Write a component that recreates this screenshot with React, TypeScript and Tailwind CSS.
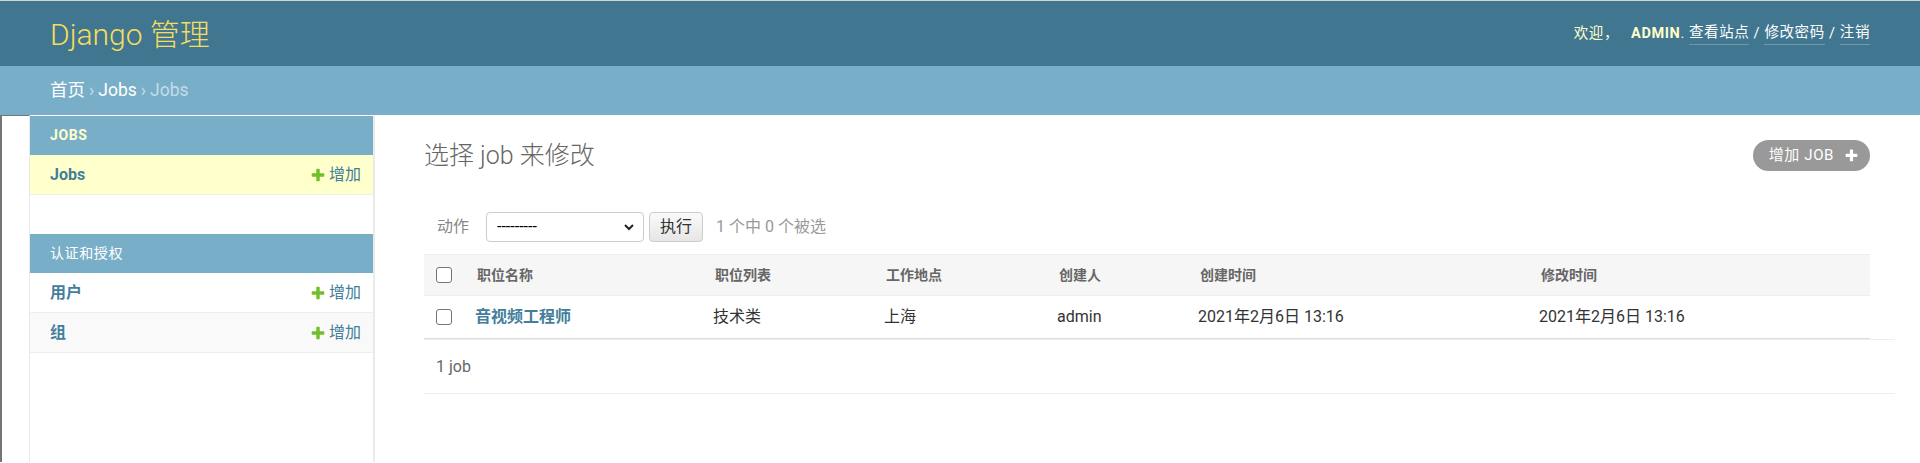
import React from 'react';

const PLUS_PATH =
  'M1600 796v192q0 40-28 68t-68 28h-416v416q0 40-28 68t-68 28h-192q-40 0-68-28t-28-68v-416h-416q-40 0-68-28t-28-68v-192q0-40 28-68t68-28h416v-416q0-40 28-68t68-28h192q40 0 68 28t28 68v416h416q40 0 68 28t28 68z';

const PlusIcon = ({ color, size }: { color: string; size: number }) => (
  <svg width={size} height={size} viewBox="0 0 1792 1792">
    <path fill={color} d={PLUS_PATH} />
  </svg>
);

type Section = {
  title: string;
  current?: boolean;
  models: { name: string; current?: boolean }[];
};

const sections: Section[] = [
  { title: 'Jobs', current: true, models: [{ name: 'Jobs', current: true }] },
  { title: '认证和授权', models: [{ name: '用户' }, { name: '组' }] },
];

const columns = [
  { label: '职位名称', width: 'w-[238px]' },
  { label: '职位列表', width: 'w-[171px]' },
  { label: '工作地点', width: 'w-[173px]' },
  { label: '创建人', width: 'w-[141px]' },
  { label: '创建时间', width: 'w-[341px]' },
  { label: '修改时间', width: 'w-[341px]' },
];

const row = ['技术类', '上海', 'admin', '2021年2月6日 13:16', '2021年2月6日 13:16'];

const Checkbox = () => (
  <div className="w-[16px] h-[16px] rounded-[3px] border border-[#767676] bg-white" />
);

const Sidebar = () => (
  <div className="w-[345px] shrink-0 border-r-2 border-[#eaeaea] pt-px">
    {sections.map((section, i) => (
      <div key={section.title} className={i === 0 ? 'mb-[39px]' : ''}>
        <div
          className={`h-[39px] flex items-center pl-[20px] bg-[#79aec8] text-[14px] uppercase tracking-[0.6px] ${
            section.current ? 'font-bold text-[#ffffcc]' : 'text-white'
          }`}
        >
          {section.title}
        </div>
        {section.models.map((model, j) => (
          <div
            key={model.name}
            className={`h-[40px] flex items-center justify-between pl-[20px] pr-[12px] border-b border-[#eeeeee] ${
              model.current ? 'bg-[#ffffcc]' : j % 2 === 1 ? 'bg-[#f9f9f9]' : 'bg-white'
            }`}
          >
            <span className="text-[16px] font-bold text-[#447e9b]">{model.name}</span>
            <span className="flex items-center gap-[3px] text-[16px] text-[#447e9b]">
              <PlusIcon color="#70bf2b" size={16} />
              增加
            </span>
          </div>
        ))}
      </div>
    ))}
  </div>
);

const App = () => {
  return (
    <div className="min-h-screen bg-white border-t border-[#d4d4d4] font-['Roboto','Noto_Sans_CJK_SC',sans-serif]">
      <header className="h-[65px] bg-[#417690] flex items-center justify-between px-[50px]">
        <div className="text-[30px] font-light leading-none text-[#f5dd5d] pt-[2px]">Django 管理</div>
        <div className="text-[14.5px] tracking-[0.6px] text-[#ffffcc] flex items-center">
          <span>欢迎，</span>
          <span className="font-bold ml-[12px]">ADMIN</span>
          <span>.&nbsp;</span>
          <span className="text-white border-b border-white/25">查看站点</span>
          <span className="text-white">&nbsp;/&nbsp;</span>
          <span className="text-white border-b border-white/25">修改密码</span>
          <span className="text-white">&nbsp;/&nbsp;</span>
          <span className="text-white border-b border-white/25">注销</span>
        </div>
      </header>

      <div className="h-[49px] bg-[#79aec8] flex items-center px-[50px] text-[17.5px] text-[#c4dce8]">
        <span className="text-white">首页</span>
        <span className="mx-[4px]">›</span>
        <span className="text-white">Jobs</span>
        <span className="mx-[4px]">›</span>
        <span>Jobs</span>
      </div>

      <div className="flex h-[347px]">
        <div className="w-[30px] shrink-0 border-l-2 border-t border-l-[#767676] border-t-[#767676] border-r border-r-[#eaeaea]" />
        <Sidebar />

        <main className="flex-1 min-w-0 pl-[49px] pr-[50px] pt-[25px]">
          <div className="flex items-start justify-between">
            <h1 className="text-[25px] font-light leading-[31px] text-[#666666]">选择 job 来修改</h1>
            <div className="h-[31px] rounded-full bg-[#999999] flex items-center pl-[16px] pr-[11px] gap-[10px] text-[15px] tracking-[0.6px] text-white uppercase">
              增加 job
              <PlusIcon color="#ffffff" size={15} />
            </div>
          </div>

          <div className="mt-[41px] h-[30px] flex items-center text-[16px]">
            <span className="ml-[13px] text-[#888888]">动作</span>
            <div className="ml-[17px] w-[158px] h-[30px] rounded-[4px] border border-[#cccccc] bg-white flex items-center justify-between pl-[10px] pr-[8px] text-black">
              <span>---------</span>
              <svg width="12" height="12" viewBox="0 0 12 12">
                <path d="M2 4l4 4 4-4" fill="none" stroke="#222" strokeWidth="2" />
              </svg>
            </div>
            <div className="ml-[5px] w-[54px] h-[30px] rounded-[4px] border border-[#cccccc] bg-gradient-to-b from-[#fafafa] to-[#e6e6e6] flex items-center justify-center text-[#333333]">
              执行
            </div>
            <span className="ml-[13px] text-[#999999]">1 个中 0 个被选</span>
          </div>

          <table className="mt-[12px] w-full table-fixed border-collapse">
            <colgroup>
              <col className="w-[41px]" />
              {columns.map((c) => (
                <col key={c.label} className={c.width} />
              ))}
            </colgroup>
            <thead>
              <tr className="h-[41px] bg-[#f6f6f6] border-t border-b border-[#eeeeee]">
                <th className="pl-[12px] align-middle">
                  <Checkbox />
                </th>
                {columns.map((c) => (
                  <th key={c.label} className="pl-[12px] text-left text-[14px] font-bold text-[#666666]">
                    {c.label}
                  </th>
                ))}
              </tr>
            </thead>
            <tbody>
              <tr className="h-[43px] border-b border-[#dddddd]">
                <td className="pl-[12px] align-middle">
                  <Checkbox />
                </td>
                <th className="pl-[10px] text-left text-[16px] font-bold text-[#447e9b]">音视频工程师</th>
                {row.map((cell, i) => (
                  <td key={i} className="pl-[10px] text-[16px] text-[#333333]">
                    {cell}
                  </td>
                ))}
              </tr>
            </tbody>
          </table>

          <div className="w-[1471px] h-[55px] border-y border-[#eeeeee] flex items-center pl-[12px] text-[16px] text-[#666666]">
            1 job
          </div>
        </main>
      </div>
    </div>
  );
};

export default App;
